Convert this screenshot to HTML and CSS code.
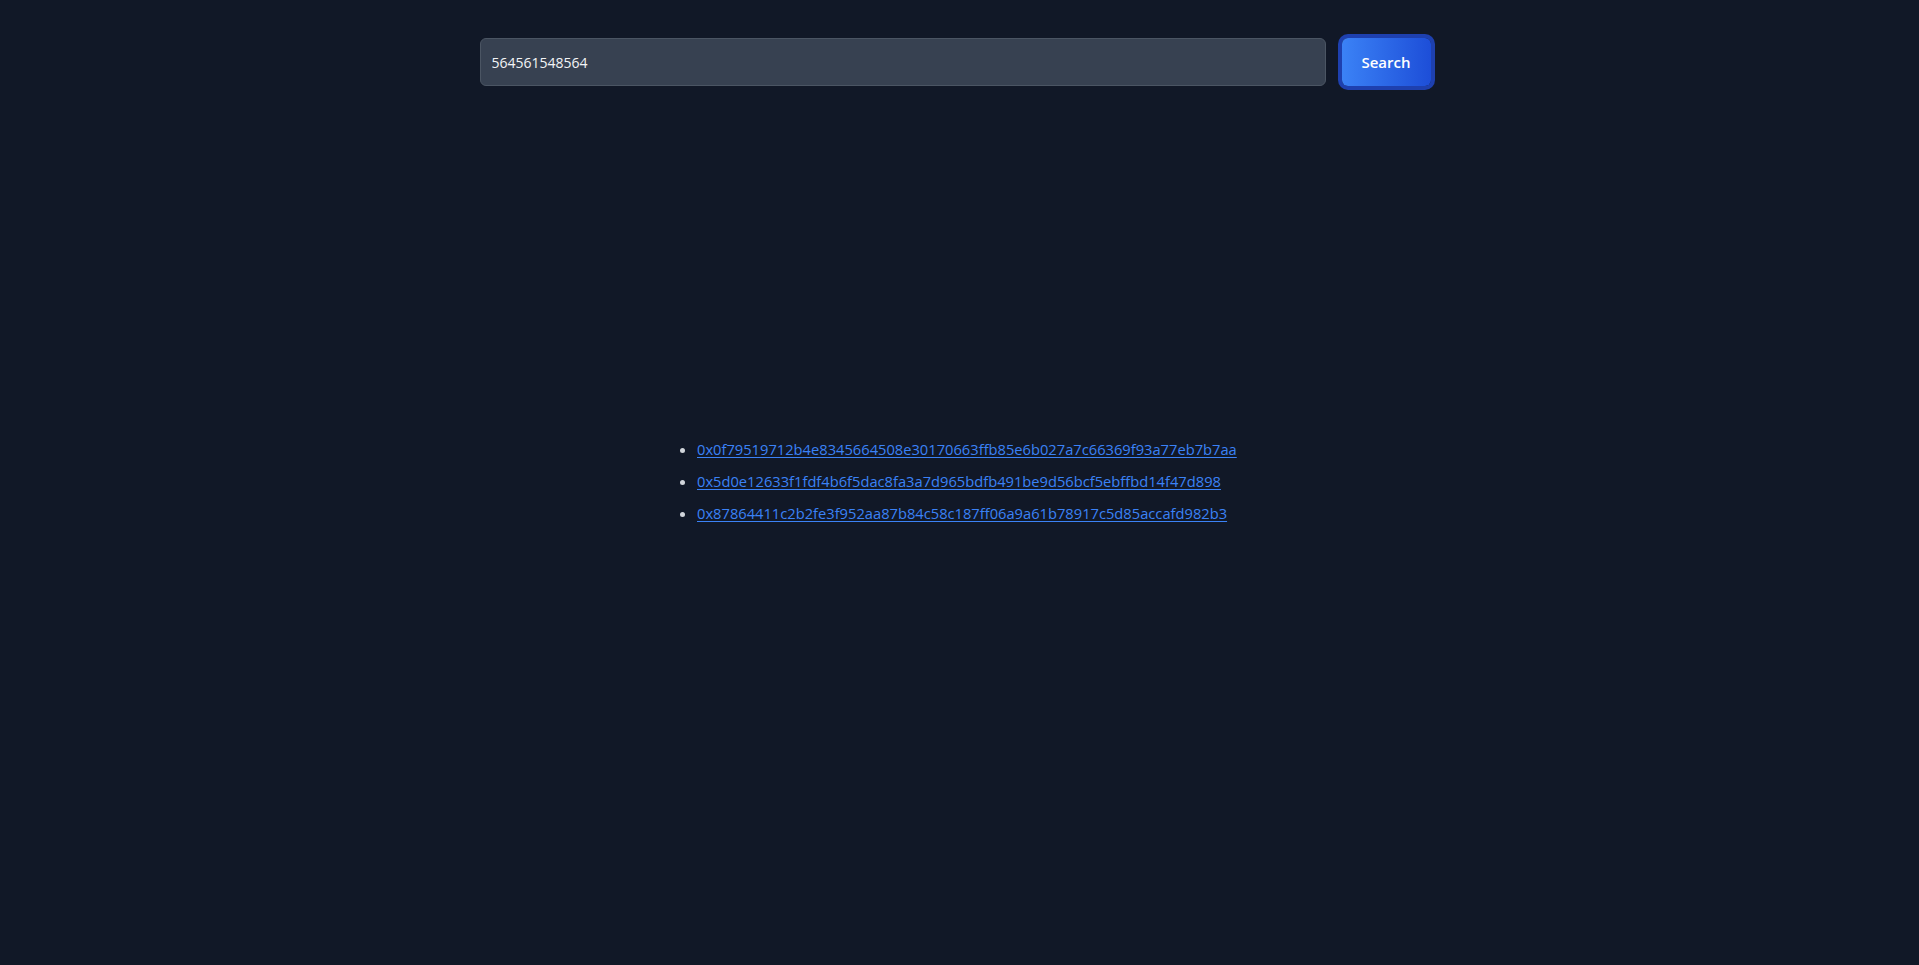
FILE: index.html
```html
<!DOCTYPE html>
<html>
<head>
<meta charset="utf-8">
<link rel="stylesheet" href="styles.css">
</head>
<body>
<main class="page">
  <form class="search-row">
    <input class="search-input" type="text" value="564561548564">
    <button class="search-btn" type="button">Search</button>
  </form>
  <ul class="results">
    <li><a href="#">0x0f79519712b4e8345664508e30170663ffb85e6b027a7c66369f93a77eb7b7aa</a></li>
    <li><a href="#">0x5d0e12633f1fdf4b6f5dac8fa3a7d965bdfb491be9d56bcf5ebffbd14f47d898</a></li>
    <li><a href="#">0x87864411c2b2fe3f952aa87b84c58c187ff06a9a61b78917c5d85accafd982b3</a></li>
  </ul>
</main>
</body>
</html>
```
FILE: styles.css
```css
html, body {
  margin: 0;
  padding: 0;
  background: #111827;
  min-height: 100%;
}
body {
  font-family: "Open Sans", "Noto Sans", sans-serif;
  color: #e5e7eb;
}
.page {
  padding-top: 38px;
}
.search-row {
  width: 960px;
  margin: 0 auto;
  padding-right: 9px;
  box-sizing: border-box;
  display: flex;
  gap: 16px;
}
.search-input {
  flex: 1;
  height: 48px;
  box-sizing: border-box;
  background: #374151;
  border: 1px solid #4b5563;
  border-radius: 6px;
  padding: 0 11px;
  color: #f3f4f6;
  font-family: "Open Sans", sans-serif;
  font-size: 14px;
  outline: none;
}
.search-btn {
  width: 89px;
  height: 48px;
  border: none;
  border-radius: 6px;
  background: linear-gradient(90deg, #3b82f6, #1d4ed8);
  box-shadow: 0 0 0 4px #1e40af;
  color: #ffffff;
  font-family: "Open Sans", sans-serif;
  font-weight: 600;
  font-size: 15px;
}
.results {
  margin: 351px 0 0 0;
  padding: 0 0 0 697px;
  list-style: disc;
  color: #d1d5db;
}
.results li {
  line-height: 24px;
  margin-bottom: 8px;
  font-size: 14.7px;
}
.results a {
  color: #3b82f6;
  font-weight: 500;
  text-decoration: underline;
  text-underline-offset: 2px;
}
```
